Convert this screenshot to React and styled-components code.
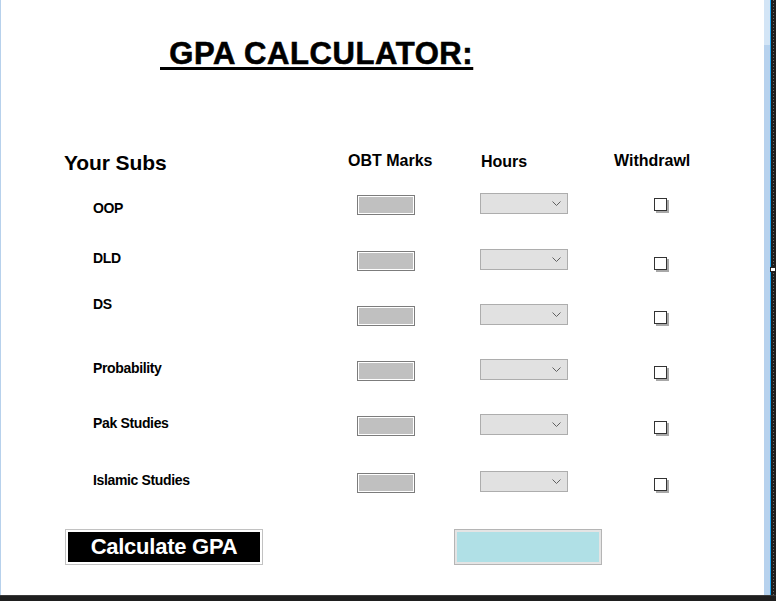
import React from 'react'
import styled, { createGlobalStyle } from 'styled-components'

const GlobalStyle = createGlobalStyle`
  html, body {
    margin: 0;
    padding: 0;
    background: #ffffff;
  }
  body {
    font-family: "Liberation Sans", Arial, sans-serif;
  }
`

const Screen = styled.div`
  width: 776px;
  height: 601px;
  display: flex;
  flex-direction: column;
  overflow: hidden;
`

const Main = styled.div`
  flex: 1;
  display: flex;
`

const LeftEdge = styled.div`
  width: 1px;
  background: #b7d1ec;
`

const Form = styled.div`
  width: 763px;
  background: #ffffff;
  padding-top: 36px;
  box-sizing: border-box;
`

const RightFrame = styled.div`
  width: 6px;
  background: linear-gradient(to bottom, #d3e5f6 0, #d3e5f6 45px, #b7d2ee 45px);
`

const CyanLine = styled.div`
  width: 1px;
  background: #1aa3f0;
`

const Gutter = styled.div`
  position: relative;
  width: 5px;
  background:
    repeating-linear-gradient(to bottom, #6a6a6a 0, #6a6a6a 1px, transparent 1px, transparent 3px) 2px 0 / 1px 100% no-repeat,
    #1e1e1e;
`

const Handle = styled.div`
  position: absolute;
  left: -1px;
  top: 267px;
  width: 6px;
  height: 5px;
  background: #ffffff;
  border: 1px solid #222;
  box-sizing: border-box;
`

const BottomBar = styled.div`
  height: 6px;
  background: #1f1f1f;
  border-top: 1px solid #3a3a3a;
  box-sizing: border-box;
`

const Title = styled.h1`
  margin: 0 0 0 159px;
  font-size: 31px;
  line-height: 35px;
  font-weight: bold;
  letter-spacing: 0.6px;
  color: #000;
  white-space: pre;
  -webkit-text-stroke: 0.6px #000;
  text-decoration: underline;
  text-decoration-thickness: 3px;
  text-underline-offset: 3px;
`

const Table = styled.div`
  margin-top: 79px;
  padding-left: 63px;
`

const Row = styled.div`
  display: grid;
  grid-template-columns: 293px 123px 134px 100px;
  align-items: start;
  height: ${p => p.$h}px;
`

const Heading = styled.div`
  font-size: ${p => (p.$big ? 21 : 16)}px;
  line-height: ${p => (p.$big ? 24 : 18)}px;
  font-weight: bold;
  letter-spacing: ${p => (p.$big ? '-0.1px' : '0')};
  color: #000;
  margin-top: ${p => p.$dy}px;
  margin-left: ${p => p.$dx || 0}px;
  white-space: nowrap;
`

const SubLabel = styled.div`
  font-size: 14px;
  line-height: 16px;
  font-weight: bold;
  letter-spacing: -0.35px;
  color: #000;
  margin-left: 29px;
  margin-top: ${p => p.$dy}px;
  white-space: nowrap;
`

const MarksBox = styled.div`
  width: 58px;
  height: 20px;
  margin-top: 2px;
  box-sizing: border-box;
  border: 1px solid #7c7c7c;
  box-shadow: inset 0 0 0 1px #ffffff;
  background: #c0c0c0;
`

const Dropdown = styled.div`
  width: 88px;
  height: 21px;
  box-sizing: border-box;
  border: 1px solid #adadad;
  background: #e1e1e1;
  display: flex;
  align-items: center;
  justify-content: flex-end;
  padding-right: 6px;
  svg {
    display: block;
  }
`

const CheckBox = styled.div`
  width: 13px;
  height: 13px;
  box-sizing: border-box;
  margin-left: 40px;
  margin-top: ${p => p.$dy}px;
  border: 1px solid #333333;
  background: #ffffff;
  box-shadow: 2px 2px 0 0 #a8a8a8;
`

const Footer = styled.div`
  display: flex;
  align-items: flex-start;
  padding-left: 64px;
`

const CalcButton = styled.button`
  width: 198px;
  height: 36px;
  box-sizing: border-box;
  border: 1px solid #c2c2c2;
  box-shadow: inset 0 0 0 2px #ffffff;
  background: #000000;
  color: #ffffff;
  font-family: "Liberation Sans", Arial, sans-serif;
  font-size: 22px;
  font-weight: bold;
  letter-spacing: -0.25px;
  padding: 0 0 1px 0;
  cursor: pointer;
`

const ResultBox = styled.div`
  width: 148px;
  height: 36px;
  margin-left: 191px;
  box-sizing: border-box;
  border: 1px solid #b5b5b5;
  box-shadow: inset 0 0 0 2px #e4e4e4;
  background: #b0e0e6;
`

const Chevron = () => (
  <svg width="9" height="5" viewBox="0 0 9 5">
    <path d="M0.5 0.5 L4.5 4.5 L8.5 0.5" fill="none" stroke="#606060" strokeWidth="1" />
  </svg>
)

const subjects = [
  { name: 'OOP', h: 56, label: 7, check: 5 },
  { name: 'DLD', h: 55, label: 1, check: 8 },
  { name: 'DS', h: 55, label: -8, check: 7 },
  { name: 'Probability', h: 55, label: 1, check: 7 },
  { name: 'Pak Studies', h: 57, label: 1, check: 7 },
  { name: 'Islamic Studies', h: 58, label: 1, check: 7 },
]

export default function App() {
  return (
    <Screen>
      <GlobalStyle />
      <Main>
        <LeftEdge />
        <Form>
          <Title>{' GPA CALCULATOR:'}</Title>
          <Table>
            <Row $h={43}>
              <Heading $big $dy={1}>Your Subs</Heading>
              <Heading $dy={2} $dx={-9}>OBT Marks</Heading>
              <Heading $dy={3} $dx={1}>Hours</Heading>
              <Heading $dy={2}>Withdrawl</Heading>
            </Row>
            {subjects.map(s => (
              <Row key={s.name} $h={s.h}>
                <SubLabel $dy={s.label}>{s.name}</SubLabel>
                <MarksBox />
                <Dropdown>
                  <Chevron />
                </Dropdown>
                <CheckBox $dy={s.check} />
              </Row>
            ))}
          </Table>
          <Footer>
            <CalcButton>Calculate GPA</CalcButton>
            <ResultBox />
          </Footer>
        </Form>
        <RightFrame />
        <CyanLine />
        <Gutter>
          <Handle />
        </Gutter>
      </Main>
      <BottomBar />
    </Screen>
  )
}
